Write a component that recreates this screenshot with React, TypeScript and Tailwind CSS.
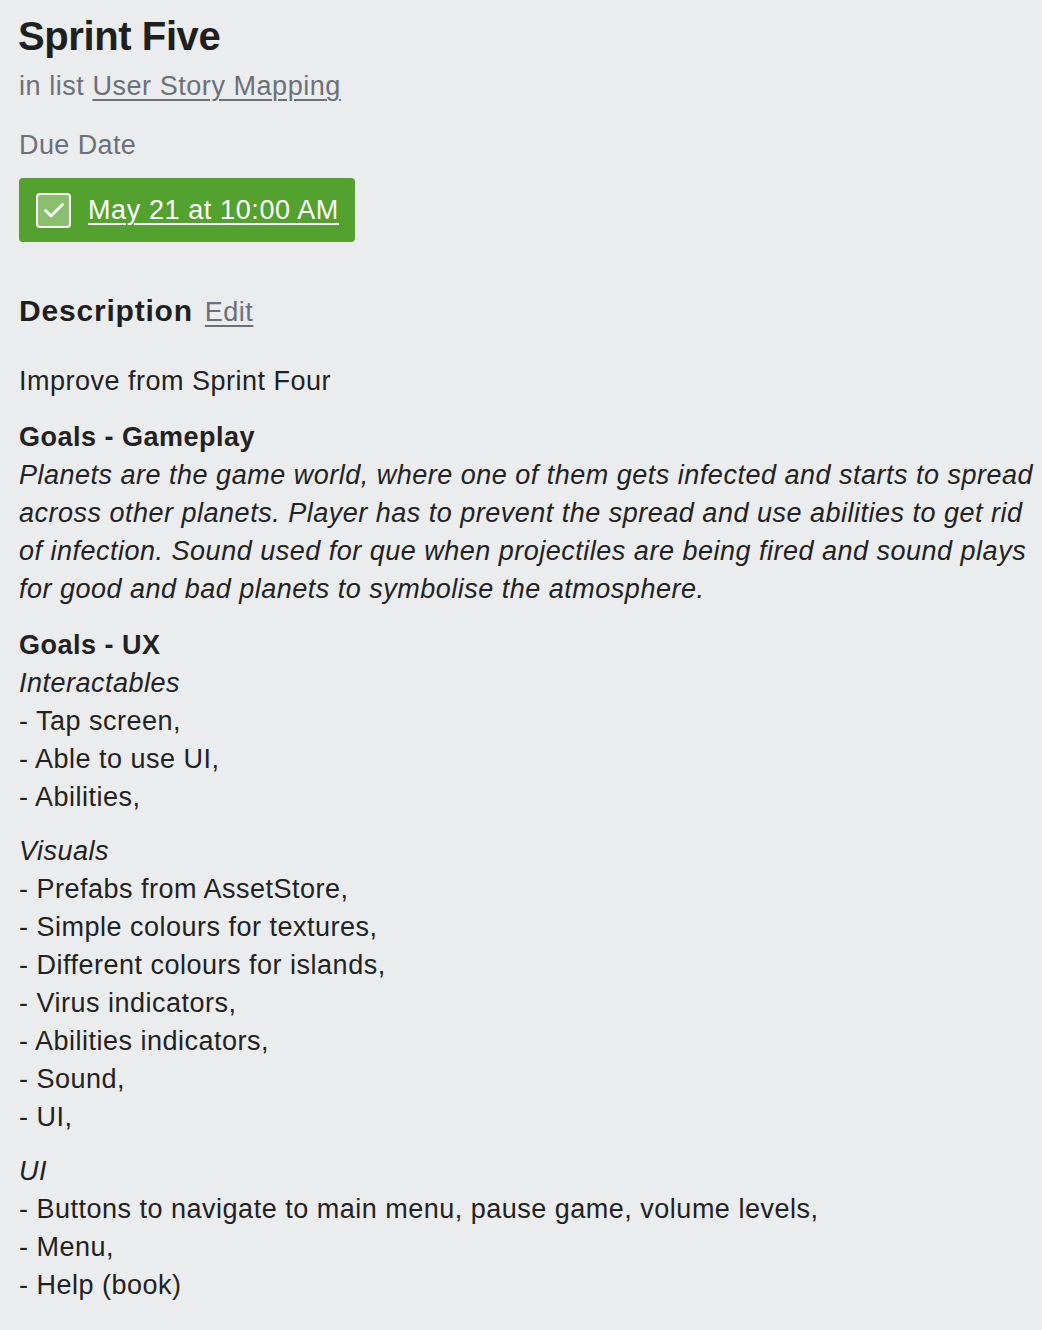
import React from 'react';

const font = { fontFamily: '"Liberation Sans", Arial, sans-serif' };

const Line: React.FC<{ children: React.ReactNode; className?: string }> = ({ children, className }) => (
  <div className={`whitespace-nowrap ${className ?? ''}`}>{children}</div>
);

export default function App() {
  const gameplay = [
    'Planets are the game world, where one of them gets infected and starts to spread',
    'across other planets. Player has to prevent the spread and use abilities to get rid',
    'of infection. Sound used for que when projectiles are being fired and sound plays',
    'for good and bad planets to symbolise the atmosphere.',
  ];

  const interactables = ['- Tap screen,', '- Able to use UI,', '- Abilities,'];

  const visuals = [
    '- Prefabs from AssetStore,',
    '- Simple colours for textures,',
    '- Different colours for islands,',
    '- Virus indicators,',
    '- Abilities indicators,',
    '- Sound,',
    '- UI,',
  ];

  const ui = ['- Buttons to navigate to main menu, pause game, volume levels,', '- Menu,', '- Help (book)'];

  return (
    <div className="min-h-[1330px] w-[1042px] overflow-hidden bg-[#ebecee] text-[#222]" style={font}>
      <div className="pl-[19px] pt-[12px]">
        <h1 className="ml-[-1px] text-[40px] font-bold leading-[48px] tracking-[-0.4px] text-[#1f1f1f]">Sprint Five</h1>
        <div className="mt-[8px] text-[27px] leading-[36px] tracking-[0.55px] text-[#6b7079]">
          in list <a className="underline decoration-[2px] underline-offset-[4px]">User Story Mapping</a>
        </div>

        <div className="mt-[23px] text-[27px] leading-[36px] tracking-[0.4px] text-[#6b7079]">Due Date</div>

        <div className="mt-[15px] flex h-[64px] w-[336px] items-center rounded-[4px] bg-[#53a22f] pl-[17px]">
          <span className="flex h-[35px] w-[35px] items-center justify-center rounded-[4px] border-[2px] border-white bg-[#8abf6d]">
            <svg width="26" height="26" viewBox="0 0 26 26" fill="none">
              <path d="M4.5 13.5 L10 19 L21.5 7.5" stroke="white" strokeWidth="2.8" strokeLinecap="round" strokeLinejoin="round" />
            </svg>
          </span>
          <a className="ml-[17px] text-[27px] leading-[36px] tracking-[0.6px] text-white underline decoration-[2px] underline-offset-[4px]">
            May 21 at 10:00 AM
          </a>
        </div>

        <div className="mt-[49px] flex items-baseline">
          <h2 className="text-[30px] font-bold leading-[40px] tracking-[0.8px] text-[#1f1f1f]">Description</h2>
          <a className="ml-[12px] text-[27px] leading-[36px] tracking-[0.5px] text-[#6b7079] underline decoration-[2px] underline-offset-[4px]">
            Edit
          </a>
        </div>

        <div className="mt-[31px] text-[27px] leading-[38px] tracking-[0.5px]">
          <div className="mb-[18px]">
            <Line>Improve from Sprint Four</Line>
          </div>

          <div className="mb-[18px]">
            <Line className="font-bold">Goals - Gameplay</Line>
            {gameplay.map((l, i) => (
              <Line key={i} className="italic">
                {l}
              </Line>
            ))}
          </div>

          <div className="mb-[16px]">
            <Line className="font-bold">Goals - UX</Line>
            <Line className="italic">Interactables</Line>
            {interactables.map((l, i) => (
              <Line key={i}>{l}</Line>
            ))}
          </div>

          <div className="mb-[16px]">
            <Line className="italic">Visuals</Line>
            {visuals.map((l, i) => (
              <Line key={i}>{l}</Line>
            ))}
          </div>

          <div>
            <Line className="italic">UI</Line>
            {ui.map((l, i) => (
              <Line key={i}>{l}</Line>
            ))}
          </div>
        </div>
      </div>
    </div>
  );
}
